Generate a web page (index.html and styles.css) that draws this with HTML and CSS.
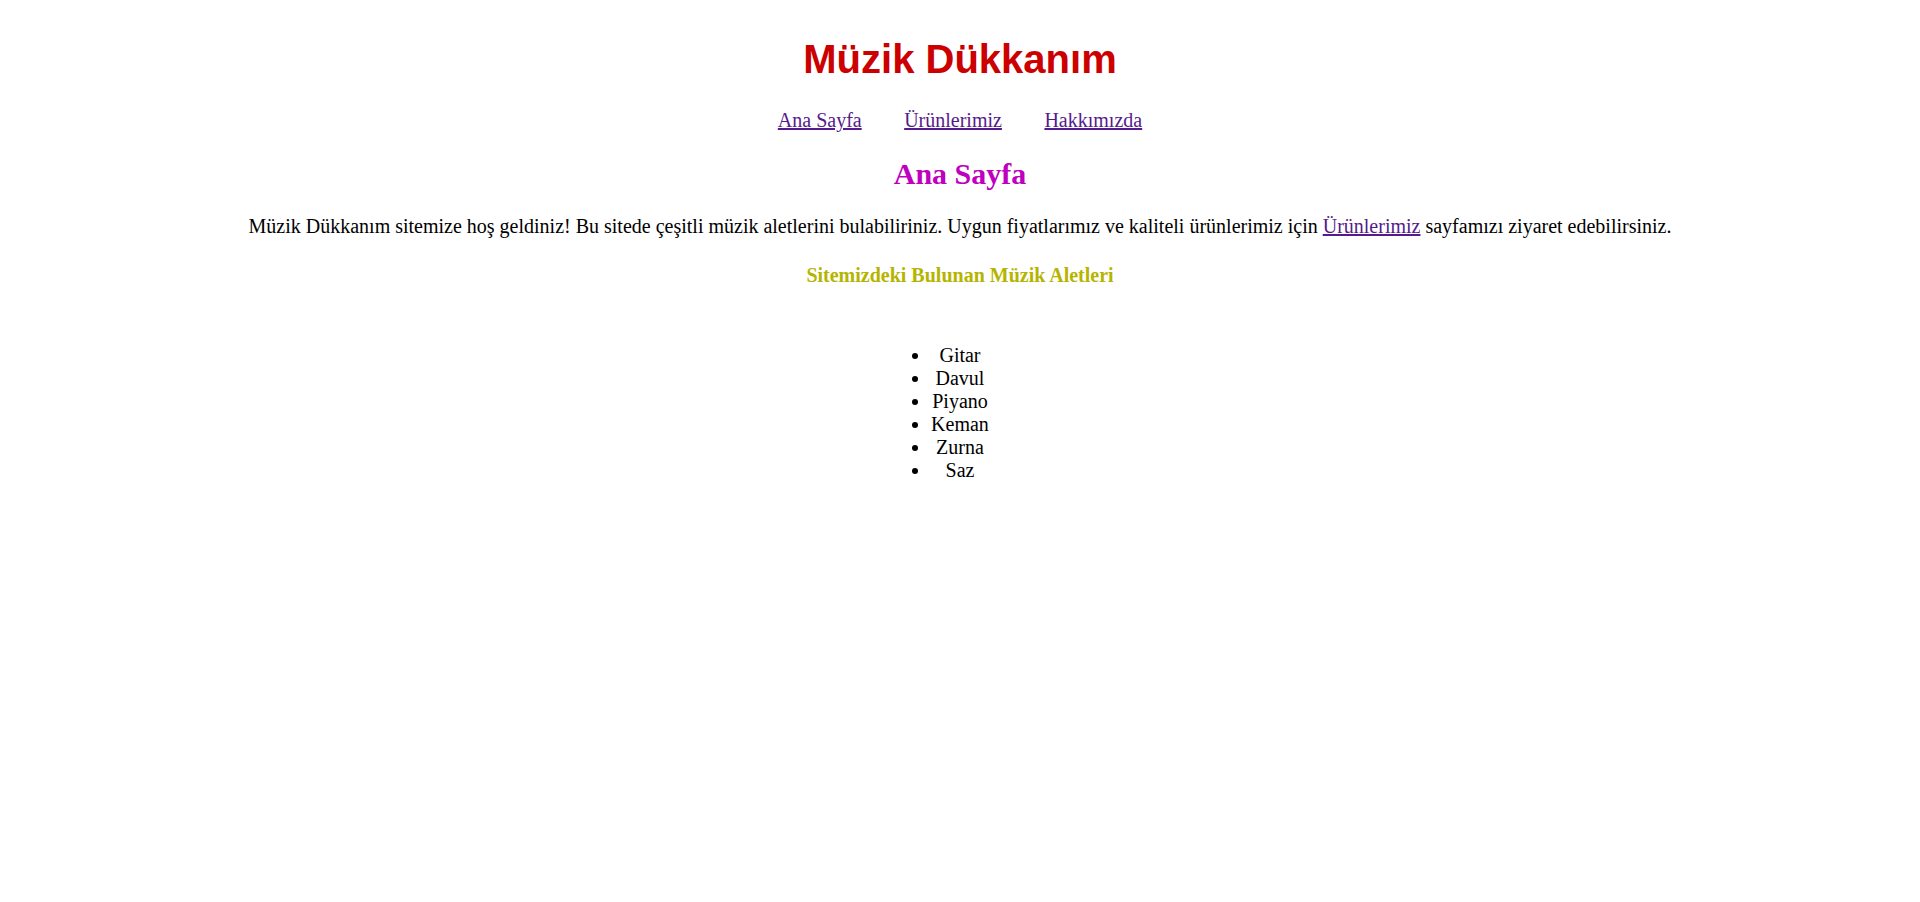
FILE: index.html
```html
<!DOCTYPE html>
<html lang="tr">
<head>
<meta charset="utf-8">
<title>Müzik Dükkanım</title>
<link rel="stylesheet" href="styles.css">
</head>
<body>
<header class="site-header">
  <h1 class="site-title">Müzik Dükkanım</h1>
  <nav class="site-nav">
    <a class="nav-link" href="#">Ana Sayfa</a>
    <a class="nav-link" href="#">Ürünlerimiz</a>
    <a class="nav-link" href="#">Hakkımızda</a>
  </nav>
</header>
<main class="content">
  <h2 class="page-title">Ana Sayfa</h2>
  <p class="intro">Müzik Dükkanım sitemize hoş geldiniz! Bu sitede çeşitli müzik aletlerini bulabiliriniz. Uygun fiyatlarımız ve kaliteli ürünlerimiz için <a class="text-link" href="#">Ürünlerimiz</a> sayfamızı ziyaret edebilirsiniz.</p>
  <h3 class="section-title">Sitemizdeki Bulunan Müzik Aletleri</h3>
  <div class="list-wrap">
    <ul class="instruments">
      <li>Gitar</li>
      <li>Davul</li>
      <li>Piyano</li>
      <li>Keman</li>
      <li>Zurna</li>
      <li>Saz</li>
    </ul>
  </div>
</main>
</body>
</html>
```

FILE: styles.css
```css
html, body {
  margin: 0;
  padding: 0;
  background: #ffffff;
}

body {
  font-family: "Liberation Serif", "Times New Roman", serif;
  font-size: 20px;
  line-height: 23px;
  color: #000000;
  text-align: center;
  padding: 0 10px;
}

.site-title {
  font-family: "Liberation Sans", Arial, sans-serif;
  font-size: 40px;
  line-height: 46px;
  font-weight: bold;
  color: #cc0000;
  margin: 36px 0 27px;
}

.site-nav {
  line-height: 23px;
  margin: 0 0 25px;
}

.nav-link {
  margin: 0 18.75px;
}

.nav-link,
.text-link {
  color: #551a8b;
  text-decoration: underline;
}

.page-title {
  font-size: 30px;
  line-height: 34.5px;
  font-weight: bold;
  color: #c000c0;
  margin: 0 0 23.5px;
}

.intro {
  margin: 0 0 26px;
}

.section-title {
  font-size: 20px;
  line-height: 23px;
  font-weight: bold;
  color: #b5b400;
  margin: 0 0 56.5px;
}

.list-wrap {
  text-align: center;
}

.instruments {
  display: inline-block;
  margin: 0;
  padding: 0;
  list-style: disc outside;
}

.instruments li {
  text-align: center;
}
```
